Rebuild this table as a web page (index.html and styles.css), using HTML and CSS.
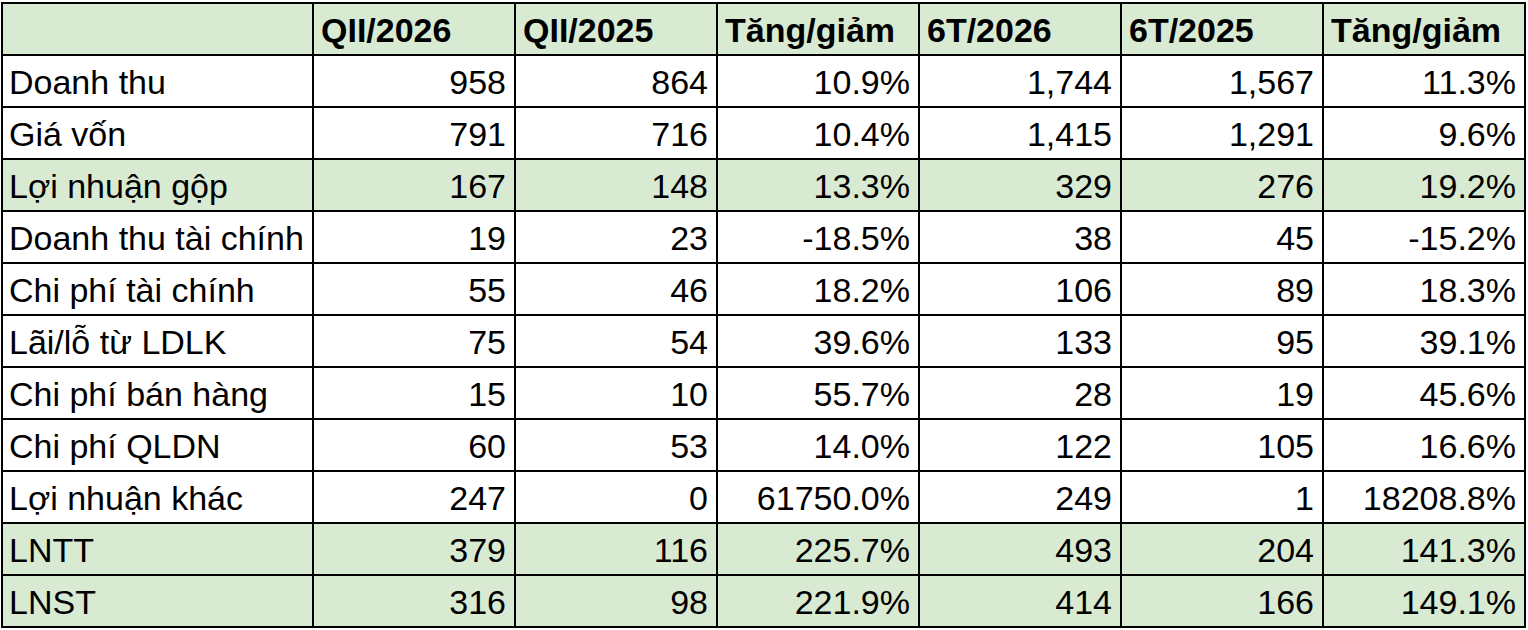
FILE: index.html
```html
<!DOCTYPE html>
<html lang="vi">
<head>
<meta charset="utf-8">
<title>Kết quả kinh doanh</title>
<link rel="stylesheet" href="styles.css">
</head>
<body>
<table class="sheet">
  <colgroup>
    <col class="c-label">
    <col class="c-num">
    <col class="c-num">
    <col class="c-num">
    <col class="c-num">
    <col class="c-num">
    <col class="c-num">
  </colgroup>
  <thead>
    <tr class="hl">
      <th></th>
      <th>QII/2026</th>
      <th>QII/2025</th>
      <th>Tăng/giảm</th>
      <th>6T/2026</th>
      <th>6T/2025</th>
      <th>Tăng/giảm</th>
    </tr>
  </thead>
  <tbody>
    <tr><td>Doanh thu</td><td>958</td><td>864</td><td>10.9%</td><td>1,744</td><td>1,567</td><td>11.3%</td></tr>
    <tr><td>Giá vốn</td><td>791</td><td>716</td><td>10.4%</td><td>1,415</td><td>1,291</td><td>9.6%</td></tr>
    <tr class="hl"><td>Lợi nhuận gộp</td><td>167</td><td>148</td><td>13.3%</td><td>329</td><td>276</td><td>19.2%</td></tr>
    <tr><td>Doanh thu tài chính</td><td>19</td><td>23</td><td>-18.5%</td><td>38</td><td>45</td><td>-15.2%</td></tr>
    <tr><td>Chi phí tài chính</td><td>55</td><td>46</td><td>18.2%</td><td>106</td><td>89</td><td>18.3%</td></tr>
    <tr><td>Lãi/lỗ từ LDLK</td><td>75</td><td>54</td><td>39.6%</td><td>133</td><td>95</td><td>39.1%</td></tr>
    <tr><td>Chi phí bán hàng</td><td>15</td><td>10</td><td>55.7%</td><td>28</td><td>19</td><td>45.6%</td></tr>
    <tr><td>Chi phí QLDN</td><td>60</td><td>53</td><td>14.0%</td><td>122</td><td>105</td><td>16.6%</td></tr>
    <tr><td>Lợi nhuận khác</td><td>247</td><td>0</td><td>61750.0%</td><td>249</td><td>1</td><td>18208.8%</td></tr>
    <tr class="hl"><td>LNTT</td><td>379</td><td>116</td><td>225.7%</td><td>493</td><td>204</td><td>141.3%</td></tr>
    <tr class="hl"><td>LNST</td><td>316</td><td>98</td><td>221.9%</td><td>414</td><td>166</td><td>149.1%</td></tr>
  </tbody>
</table>
</body>
</html>
```

FILE: styles.css
```css
html, body {
  margin: 0;
  padding: 0;
  background: #ffffff;
}

body {
  padding-top: 2px;
  font-family: "Liberation Sans", Arial, Helvetica, sans-serif;
  color: #000000;
}

.sheet {
  border-collapse: collapse;
  table-layout: fixed;
  width: 1524px;
  margin-left: 1px;
}

.c-label { width: 311px; }
.c-num { width: 202px; }

.sheet th,
.sheet td {
  border: 2px solid #000000;
  height: 52px;
  padding: 2px 8px 0 7px;
  font-size: 34px;
  line-height: 38px;
  white-space: nowrap;
  overflow: hidden;
  vertical-align: middle;
  box-sizing: border-box;
}

.sheet th {
  font-weight: bold;
  text-align: left;
}

.sheet td {
  text-align: right;
}

.sheet td:first-child {
  text-align: left;
  padding-left: 6px;
}

.hl th,
.hl td {
  background: #d9ead3;
}
```
